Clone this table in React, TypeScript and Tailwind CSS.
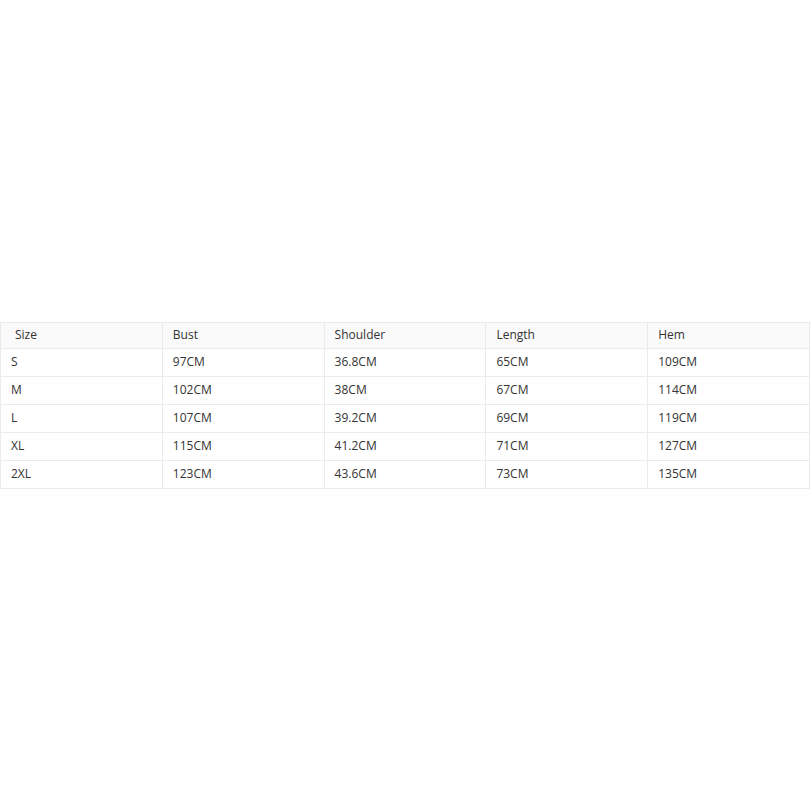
import React from "react";

const headers = ["Size", "Bust", "Shoulder", "Length", "Hem"];

const rows = [
  ["S", "97CM", "36.8CM", "65CM", "109CM"],
  ["M", "102CM", "38CM", "67CM", "114CM"],
  ["L", "107CM", "39.2CM", "69CM", "119CM"],
  ["XL", "115CM", "41.2CM", "71CM", "127CM"],
  ["2XL", "123CM", "43.6CM", "73CM", "135CM"],
];

export default function App() {
  return (
    <div className="min-h-screen w-full bg-white flex items-center justify-center font-['Open_Sans',sans-serif]">
      <table className="w-[810px] table-fixed border-collapse text-[12px] text-[#333]">
        <thead>
          <tr className="bg-[#fafafa] h-[26px]">
            {headers.map((h, i) => (
              <th
                key={h}
                className={`border border-[#ebebeb] font-normal text-left ${i === 0 ? "pl-[14px]" : "pl-[10px]"}`}
              >
                {h}
              </th>
            ))}
          </tr>
        </thead>
        <tbody>
          {rows.map((r) => (
            <tr key={r[0]} className="h-[28px]">
              {r.map((c, i) => (
                <td key={i} className="border border-[#ebebeb] pl-[10px]">
                  {c}
                </td>
              ))}
            </tr>
          ))}
        </tbody>
      </table>
    </div>
  );
}
